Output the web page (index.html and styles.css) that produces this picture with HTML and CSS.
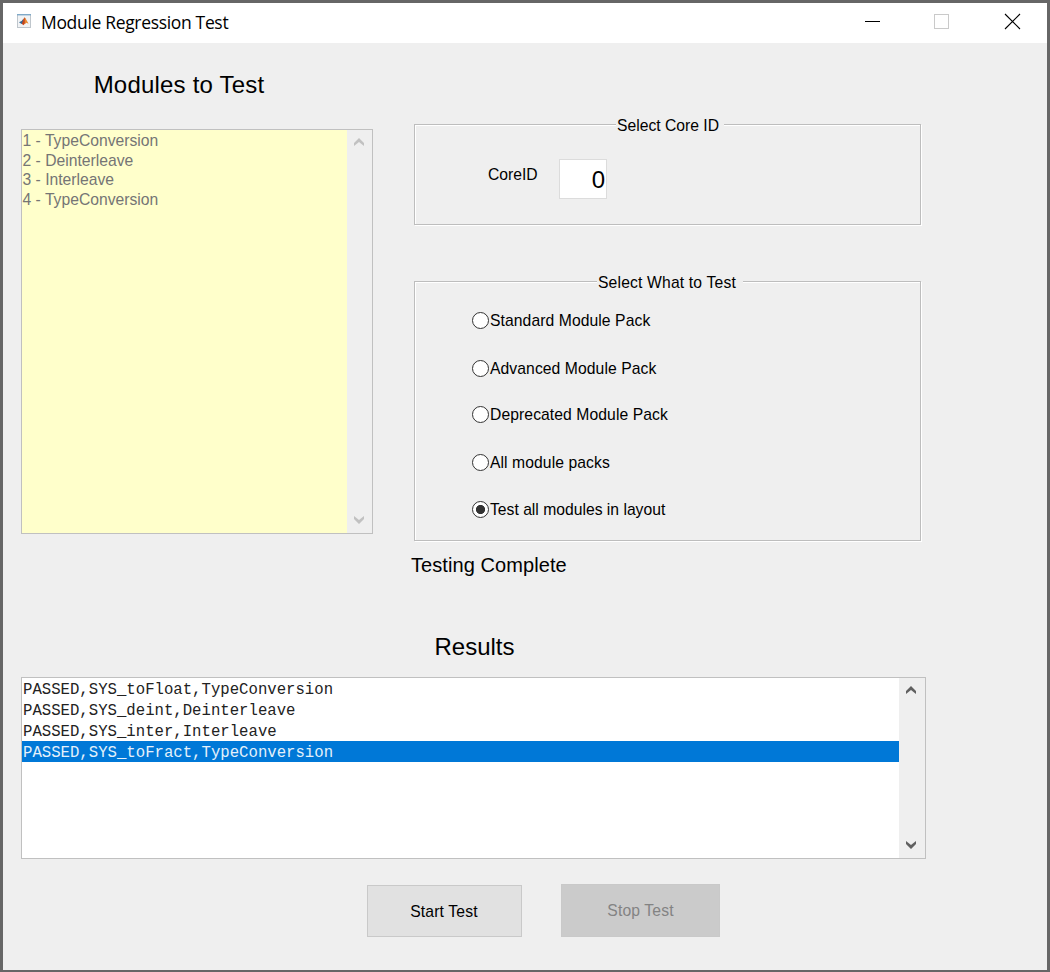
FILE: index.html
```html
<!DOCTYPE html>
<html lang="en">
<head>
<meta charset="utf-8">
<title>Module Regression Test</title>
<link rel="stylesheet" href="styles.css">
</head>
<body>
<div class="window">
  <header class="titlebar">
    <svg class="app-icon" width="14" height="14" viewBox="0 0 14 14">
      <rect x=".5" y=".5" width="13" height="13" fill="#f1f3f5" stroke="#bfc6cc"/>
      <rect x="0" y="0" width="14" height="1.4" fill="#7fa9c8"/>
      <path d="M2 8.2 4.6 7 6.6 4.6 6 9.4 4.6 10Z" fill="#2f6694"/>
      <path d="M4.8 9.8 6.3 5.5 7.6 3.2 8.7 5.2 8 9.5 6.3 11.2Z" fill="#c4451c"/>
      <path d="M7.7 3.2 9.3 5.8 11.6 9.8 9.3 8.7 7.8 10.2Z" fill="#e98a32"/>
    </svg>
    <h1 class="title">Module Regression Test</h1>
    <svg class="controls" width="162" height="20" viewBox="0 0 162 20" fill="none" shape-rendering="crispEdges">
      <path d="M2 10.5H17" stroke="#000"/>
      <rect x="71.5" y="3.5" width="14" height="14" stroke="#cacaca"/>
      <path d="M142 3 157 18M157 3 142 18" stroke="#000" stroke-width="1.1" shape-rendering="auto"/>
    </svg>
  </header>
  <main class="client">
    <div class="setup">
      <section class="modules">
        <h2 class="heading">Modules to Test</h2>
        <div class="listbox listbox-modules">
          <ul class="items">
            <li>1 - TypeConversion</li>
            <li>2 - Deinterleave</li>
            <li>3 - Interleave</li>
            <li>4 - TypeConversion</li>
          </ul>
          <div class="scrollbar">
            <svg width="10" height="8" viewBox="0 0 10 8"><path d="M5 0 10 5V8L5 4 0 8V5Z"/></svg>
            <svg width="10" height="8" viewBox="0 0 10 8"><path d="M5 8 10 3V0L5 4 0 0V3Z"/></svg>
          </div>
        </div>
      </section>
      <section class="options">
        <div class="panel panel-core">
          <div class="legend legend-core">Select Core ID</div>
          <div class="core-row">
            <span class="core-label">CoreID</span>
            <span class="core-input">0</span>
          </div>
        </div>
        <div class="panel panel-what">
          <div class="legend legend-what">Select What to Test</div>
          <div class="radios">
            <div class="radio"><i class="dot"></i><span>Standard Module Pack</span></div>
            <div class="radio"><i class="dot"></i><span>Advanced Module Pack</span></div>
            <div class="radio"><i class="dot"></i><span>Deprecated Module Pack</span></div>
            <div class="radio"><i class="dot"></i><span>All module packs</span></div>
            <div class="radio last"><i class="dot on"></i><span>Test all modules in layout</span></div>
          </div>
        </div>
        <p class="status">Testing Complete</p>
      </section>
    </div>
    <section class="results">
      <h2 class="heading">Results</h2>
      <div class="listbox listbox-results">
        <ul class="items">
          <li>PASSED,SYS_toFloat,TypeConversion</li>
          <li>PASSED,SYS_deint,Deinterleave</li>
          <li>PASSED,SYS_inter,Interleave</li>
          <li class="selected">PASSED,SYS_toFract,TypeConversion</li>
        </ul>
        <div class="scrollbar">
          <svg width="10" height="8" viewBox="0 0 10 8"><path d="M5 0 10 5V8L5 4 0 8V5Z"/></svg>
          <svg width="10" height="8" viewBox="0 0 10 8"><path d="M5 8 10 3V0L5 4 0 0V3Z"/></svg>
        </div>
      </div>
    </section>
    <div class="actions">
      <div class="button start">Start Test</div>
      <div class="button stop">Stop Test</div>
    </div>
  </main>
</div>
</body>
</html>
```
FILE: styles.css
```css
* { box-sizing: border-box; margin: 0; padding: 0; }
body { font: 15.7px/20px "Liberation Sans", Arial, sans-serif; color: #000; }
.window { width: 1050px; height: 972px; border: 3px solid #666; border-bottom-width: 2px; background: #efefef; }
.titlebar { height: 40px; display: flex; align-items: center; padding: 0 22px 0 14px; background: #fff; }
.app-icon { margin-bottom: 4px; }
.title { flex: 1; margin: 0 0 2px 10px; font: 400 17.5px/24px "Open Sans", "Noto Sans", sans-serif; letter-spacing: -.33px; white-space: nowrap; }
.controls { margin-bottom: 4px; }
.client { padding: 0 18px; }
.heading { font-size: 24px; line-height: 28px; font-weight: 400; text-align: center; }
.setup { display: flex; height: 586px; }
.modules { width: 352px; padding-top: 28px; }
.modules .heading { padding-right: 36px; letter-spacing: .2px; }
.listbox { display: flex; border: 1px solid #c0c0c0; }
.items { flex: 1; list-style: none; padding-left: 1px; }
.listbox-modules { height: 405px; margin-top: 30px; }
.listbox-modules .items { background: #ffffcb; color: #757575; line-height: 19.7px; padding: 1px 0 0 .5px; }
.scrollbar { width: 25px; background: #efefef; display: flex; flex-direction: column; justify-content: space-between; align-items: center; padding: 8px 1px 9px 0; fill: #c1c1c1; }
.options { width: 507px; margin-left: 41px; padding-top: 81px; }
.panel { border: 1px solid #bdbdbd; box-shadow: 1px 1px #fff, inset 1px 1px #fff; }
.panel-core { height: 101px; }
.panel-what { height: 260px; margin-top: 56px; }
.legend { height: 20px; background: #efefef; padding-left: 1px; margin-top: -9px; white-space: nowrap; }
.legend-core { width: 108px; margin-left: 201px; }
.legend-what { width: 146px; margin-left: 182px; letter-spacing: .16px; }
.core-row { display: flex; padding: 23px 0 0 72px; }
.core-label { width: 71px; margin-left: 1px; padding-top: 6px; }
.core-input { width: 48px; height: 40px; background: #fff; border: 1px solid #dcdcdc; font-size: 24px; line-height: 39px; text-align: right; padding-right: 1px; }
.radios { display: grid; grid-template-rows: 48px 46px 48px 47px 20px; padding: 18px 0 0 57px; }
.radio { display: flex; height: 20px; gap: 1px; white-space: nowrap; letter-spacing: .08px; }
.radio.last { letter-spacing: 0; }
.dot { width: 17px; height: 17px; margin-top: 1px; border: 1.5px solid #333; border-radius: 50%; background: #fff; }
.dot.on { background: radial-gradient(circle, #333 4.2px, #fff 5px); }
.status { font-size: 20px; line-height: 24px; margin: 12px 0 0 -3px; letter-spacing: .08px; }
.results { width: 905px; padding-top: 4px; }
.results .heading { padding-left: 2px; }
.listbox-results { height: 182px; margin-top: 16px; }
.listbox-results .items { background: #fff; color: #222; font: 15.67px/17px "Liberation Mono", monospace; }
.listbox-results li { height: 21px; margin-left: -1px; padding: 4px 0 0 1px; }
.listbox-results .selected { background: #0078d7; color: #e4f1fb; }
.listbox-results .scrollbar { width: 26px; padding-right: 2px; fill: #606060; }
.actions { display: flex; align-items: flex-end; gap: 39px; height: 78px; padding-left: 346px; }
.button { border: 1px solid #c9c9c9; text-align: center; letter-spacing: .15px; }
.start { width: 155px; height: 52px; background: #e1e1e1; line-height: 51px; padding-right: 1px; }
.stop { width: 159px; height: 53px; background: #cbcbcb; color: #838383; line-height: 52px; }
```
